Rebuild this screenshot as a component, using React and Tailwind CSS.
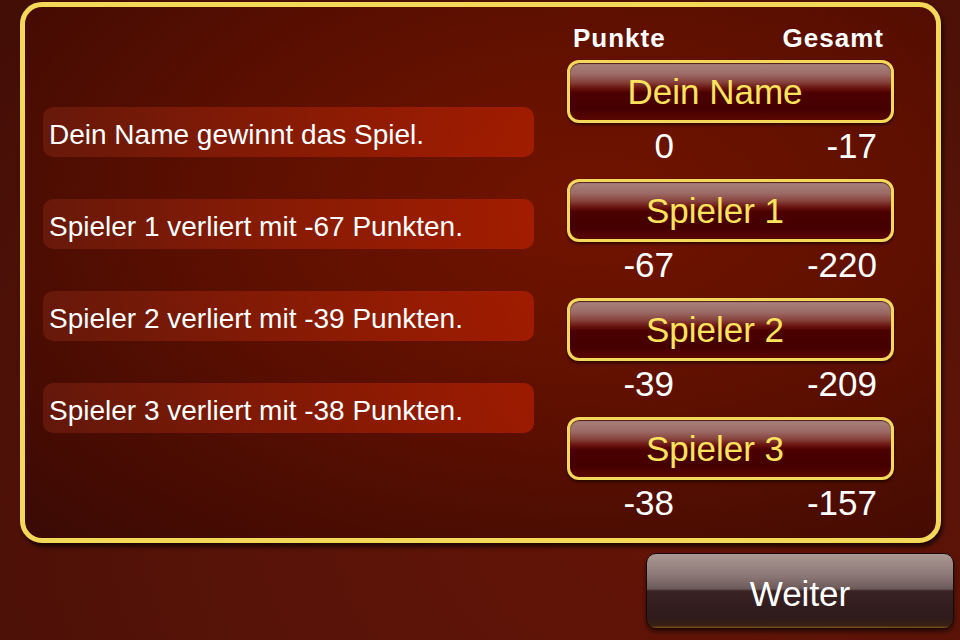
const results = [
  'Dein Name gewinnt das Spiel.',
  'Spieler 1 verliert mit -67 Punkten.',
  'Spieler 2 verliert mit -39 Punkten.',
  'Spieler 3 verliert mit -38 Punkten.',
];

const players = [
  { name: 'Dein Name', points: '0', total: '-17' },
  { name: 'Spieler 1', points: '-67', total: '-220' },
  { name: 'Spieler 2', points: '-39', total: '-209' },
  { name: 'Spieler 3', points: '-38', total: '-157' },
];

const PlayerButton = ({ name }) => (
  <div className="h-[63px] rounded-[12px] border-[3px] border-[#f4d85a] bg-[linear-gradient(to_bottom,#a8837e_0%,#9c6a66_20%,#86403a_34%,#6a1410_44%,#4c0000_52%,#440000_80%,#5a0600_100%)] shadow-[0_2px_3px_rgba(0,0,0,0.55),inset_0_1px_1px_rgba(60,0,0,0.8)] flex items-center justify-center pr-[31px] pb-[1px]">
    <span className="text-[35px] leading-[35px] text-[#fbe35e]">{name}</span>
  </div>
);

const App = () => {
  return (
    <div className="w-[960px] h-[640px] overflow-hidden pt-[2px] pl-[20px] font-['Liberation_Sans',Arial,sans-serif] bg-[radial-gradient(ellipse_at_70%_80%,#641406_0%,#581308_45%,#420e06_100%)]">
      <div className="w-[921px] h-[541px] rounded-[22px] border-[5px] border-[#f4d858] shadow-[2px_4px_4px_rgba(0,0,0,0.65)] bg-[radial-gradient(ellipse_at_62%_38%,#721400_0%,#601000_40%,#4a0c02_75%,#3a0a04_100%)] flex">
        <div className="ml-[18px] pt-[100px] w-[491px] flex flex-col gap-[42px]">
          {results.map(text => (
            <div
              key={text}
              className="h-[50px] rounded-[10px] bg-[linear-gradient(to_right,rgba(150,45,25,0.36),rgba(200,35,0,0.58))] flex items-center pl-[6px] pt-[6px]"
            >
              <span className="text-[28px] leading-[28px] text-white whitespace-nowrap">{text}</span>
            </div>
          ))}
        </div>

        <div className="ml-[33px] w-[327px] pt-[16px] flex flex-col">
          <div className="h-[30px] flex justify-between items-center pl-[6px] pr-[10px] text-[26px] leading-[30px] tracking-[1px] font-bold text-white">
            <span>Punkte</span>
            <span>Gesamt</span>
          </div>
          <div className="mt-[7px] flex flex-col">
            {players.map(p => (
              <div key={p.name} className="flex flex-col">
                <PlayerButton name={p.name} />
                <div className="h-[56px] pt-[5px] flex text-[35px] leading-[35px] text-white">
                  <span className="w-[107px] text-right">{p.points}</span>
                  <span className="flex-1 text-right pr-[17px]">{p.total}</span>
                </div>
              </div>
            ))}
          </div>
        </div>
      </div>

      <div className="flex justify-end pr-[6px] mt-[10px]">
        <button className="w-[308px] h-[76px] rounded-[10px] border border-[#1a0808] bg-[linear-gradient(to_bottom,#ab9893_0%,#8a7674_30%,#6c5a5a_47%,#3a2222_50%,#2e1a1c_85%,#3a2012_97%,#8a5a20_100%)] shadow-[0_3px_4px_rgba(0,0,0,0.55)] flex items-center justify-center pt-[4px] text-[35px] leading-[35px] text-white">
          Weiter
        </button>
      </div>
    </div>
  );
};

export default App;
